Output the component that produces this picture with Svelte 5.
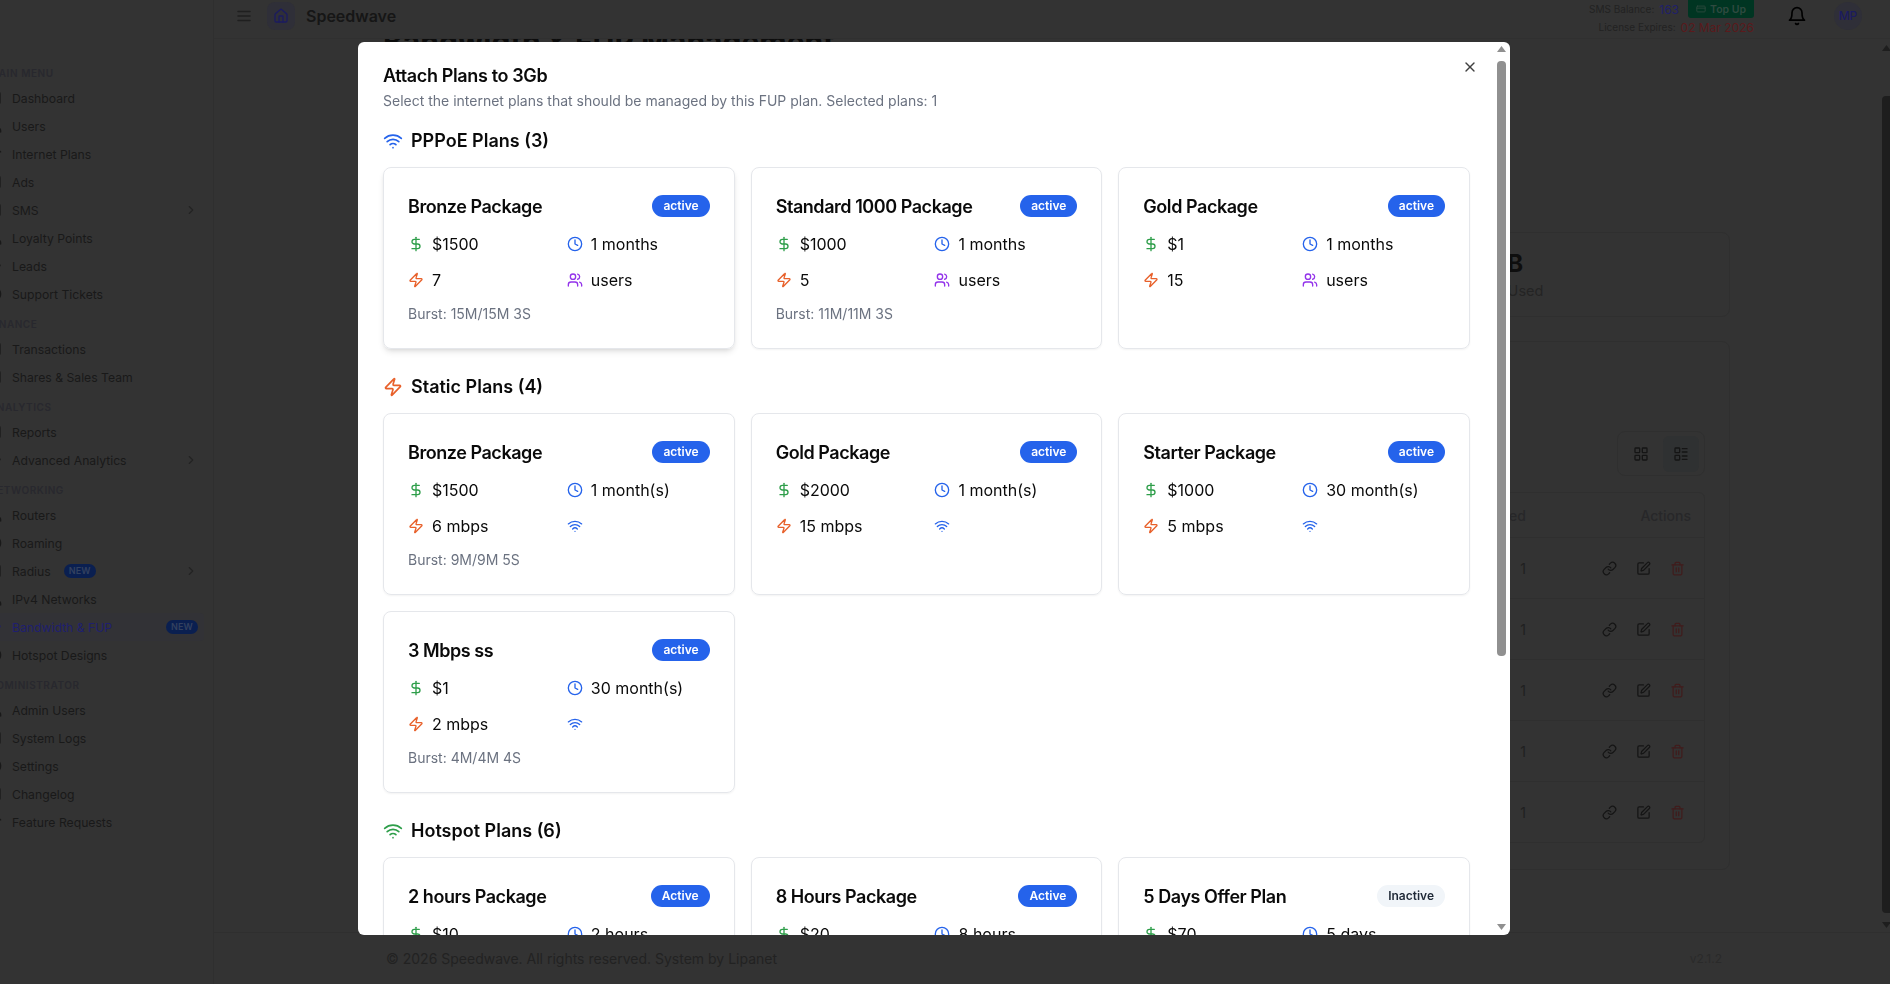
<script>
  const icons = {
    wifi: '<path d="M12 20h.01"/><path d="M2 8.82a15 15 0 0 1 20 0"/><path d="M5 12.859a10 10 0 0 1 14 0"/><path d="M8.5 16.429a5 5 0 0 1 7 0"/>',
    zap: '<path d="M4 14a1 1 0 0 1-.78-1.63l9.9-10.2a.5.5 0 0 1 .86.46l-1.92 6.02A1 1 0 0 0 13 10h7a1 1 0 0 1 .78 1.63l-9.9 10.2a.5.5 0 0 1-.86-.46l1.92-6.02A1 1 0 0 0 11 14z"/>',
    dollar: '<line x1="12" y1="2" x2="12" y2="22"/><path d="M17 5H9.5a3.5 3.5 0 0 0 0 7h5a3.5 3.5 0 0 1 0 7H6"/>',
    clock: '<circle cx="12" cy="12" r="10"/><polyline points="12 6 12 12 16 14"/>',
    users: '<path d="M16 21v-2a4 4 0 0 0-4-4H6a4 4 0 0 0-4 4v2"/><circle cx="9" cy="7" r="4"/><path d="M22 21v-2a4 4 0 0 0-3-3.87"/><path d="M16 3.13a4 4 0 0 1 0 7.75"/>',
    x: '<path d="M18 6 6 18"/><path d="m6 6 12 12"/>',
    home: '<path d="M15 21v-8a1 1 0 0 0-1-1h-4a1 1 0 0 0-1 1v8"/><path d="M3 10a2 2 0 0 1 .709-1.528l7-5.999a2 2 0 0 1 2.582 0l7 5.999A2 2 0 0 1 21 10v9a2 2 0 0 1-2 2H5a2 2 0 0 1-2-2z"/>',
    bell: '<path d="M6 8a6 6 0 0 1 12 0c0 7 3 9 3 9H3s3-2 3-9"/><path d="M10.3 21a1.94 1.94 0 0 0 3.4 0"/>',
    menu: '<path d="M4 6h16"/><path d="M4 12h16"/><path d="M4 18h16"/>',
    chevron: '<path d="m9 18 6-6-6-6"/>',
    card: '<rect x="2" y="5" width="20" height="14" rx="2"/><line x1="2" y1="10" x2="22" y2="10"/>',
    link: '<path d="M10 13a5 5 0 0 0 7.54.54l3-3a5 5 0 0 0-7.07-7.07l-1.72 1.71"/><path d="M14 11a5 5 0 0 0-7.54-.54l-3 3a5 5 0 0 0 7.07 7.07l1.71-1.71"/>',
    edit: '<path d="M12 3H5a2 2 0 0 0-2 2v14a2 2 0 0 0 2 2h14a2 2 0 0 0 2-2v-7"/><path d="M18.375 2.625a1 1 0 0 1 3 3l-9.013 9.014a2 2 0 0 1-.853.505l-2.873.84a.5.5 0 0 1-.62-.62l.84-2.873a2 2 0 0 1 .506-.852z"/>',
    trash: '<path d="M3 6h18"/><path d="M19 6v14c0 1-1 2-2 2H7c-1 0-2-1-2-2V6"/><path d="M8 6V4c0-1 1-2 2-2h4c1 0 2 1 2 2v2"/><line x1="10" y1="11" x2="10" y2="17"/><line x1="14" y1="11" x2="14" y2="17"/>',
    grid: '<rect x="3" y="3" width="7" height="7" rx="1"/><rect x="14" y="3" width="7" height="7" rx="1"/><rect x="14" y="14" width="7" height="7" rx="1"/><rect x="3" y="14" width="7" height="7" rx="1"/>',
    list: '<rect x="3" y="3" width="7" height="7" rx="1"/><rect x="3" y="14" width="7" height="7" rx="1"/><path d="M14 4h7"/><path d="M14 9h7"/><path d="M14 15h7"/><path d="M14 20h7"/>',
    box: '<rect x="3" y="3" width="18" height="18" rx="3"/>'
  };

  const nav = [
    { label: "MAIN MENU", items: [
      { name: "Dashboard" }, { name: "Users", icon: "users" }, { name: "Internet Plans", icon: "wifi" }, { name: "Ads" },
      { name: "SMS", more: true }, { name: "Loyalty Points", icon: "users" }, { name: "Leads", icon: "zap" }, { name: "Support Tickets", icon: "clock" }
    ] },
    { label: "FINANCE", items: [{ name: "Transactions" }, { name: "Shares & Sales Team" }] },
    { label: "ANALYTICS", items: [{ name: "Reports" }, { name: "Advanced Analytics", icon: "zap", more: true }] },
    { label: "NETWORKING", items: [
      { name: "Routers", icon: "users" }, { name: "Roaming", icon: "clock" }, { name: "Radius", badge: true, more: true },
      { name: "IPv4 Networks", icon: "users" }, { name: "Bandwidth & FUP", icon: "zap", active: true, badge: true }, { name: "Hotspot Designs", icon: "clock" }
    ] },
    { label: "ADMINISTRATOR", items: [
      { name: "Admin Users", icon: "users" }, { name: "System Logs" }, { name: "Settings", icon: "clock" },
      { name: "Changelog" }, { name: "Feature Requests", icon: "wifi" }
    ] }
  ];

  const pppoe = [
    { name: "Bronze Package", price: "$1500", time: "1 months", speed: "7", burst: "15M/15M 3S", hover: true },
    { name: "Standard 1000 Package", price: "$1000", time: "1 months", speed: "5", burst: "11M/11M 3S" },
    { name: "Gold Package", price: "$1", time: "1 months", speed: "15" }
  ];
  const statics = [
    { name: "Bronze Package", price: "$1500", time: "1 month(s)", speed: "6 mbps", burst: "9M/9M 5S" },
    { name: "Gold Package", price: "$2000", time: "1 month(s)", speed: "15 mbps" },
    { name: "Starter Package", price: "$1000", time: "30 month(s)", speed: "5 mbps" },
    { name: "3 Mbps ss", price: "$1", time: "30 month(s)", speed: "2 mbps", burst: "4M/4M 4S" }
  ];
  const hotspot = [
    { name: "2 hours Package", price: "$10", time: "2 hours", speed: "3 mbps", status: "Active" },
    { name: "8 Hours Package", price: "$20", time: "8 hours", speed: "3 mbps", status: "Active" },
    { name: "5 Days Offer Plan", price: "$70", time: "5 days", speed: "5 mbps", status: "Inactive" }
  ];
  const sections = [
    { title: "PPPoE Plans (3)", icon: "wifi", cls: "blue", plans: pppoe, tail: "users" },
    { title: "Static Plans (4)", icon: "zap", cls: "orange", plans: statics, tail: "wifi" },
    { title: "Hotspot Plans (6)", icon: "wifi", cls: "green", plans: hotspot, tail: "wifi" }
  ];
  const rows = ["3Gb", "5Gb", "10Gb", "20Gb", "50Gb"];
</script>

{#snippet icon(name, size, cls = "")}
  <svg class="ic {cls}" width={size} height={size} viewBox="0 0 24 24" fill="none" stroke="currentColor" stroke-width="2" stroke-linecap="round" stroke-linejoin="round">{@html icons[name]}</svg>
{/snippet}

{#snippet arrows()}
  <svg class="arrow up" width="9" height="6" viewBox="0 0 9 6"><path d="M4.5 0 9 6H0z" fill="currentColor" /></svg>
  <svg class="arrow down" width="9" height="6" viewBox="0 0 9 6"><path d="M0 0h9L4.5 6z" fill="currentColor" /></svg>
{/snippet}

<div class="shell">
  <aside class="sidebar">
    <nav class="nav">
      {#each nav as group}
        <div class="group-label">{group.label}</div>
        {#each group.items as item}
          <div class="nav-item" class:active={item.active}>
            {@render icon(item.icon ?? "box", 16)}
            <span class="nav-name">{item.name}</span>
            {#if item.badge}<span class="new" class:push={item.active}>NEW</span>{/if}
            {#if item.more}<span class="chev">{@render icon("chevron", 14)}</span>{/if}
          </div>
        {/each}
      {/each}
    </nav>
  </aside>

  <div class="main">
    <header class="topbar">
      <span class="burger">{@render icon("menu", 18)}</span>
      <span class="logo">{@render icon("home", 16)}</span>
      <span class="brand">Speedwave</span>
      <div class="status">
        <div class="status-row">
          <span>SMS Balance:</span><b class="balance">163</b>
          <span class="topup">{@render icon("card", 10)}Top Up</span>
        </div>
        <div class="status-row">
          <span>License Expires:</span><b class="expires">02 Mar 2026</b>
        </div>
      </div>
      <span class="bell">{@render icon("bell", 20)}</span>
      <span class="avatar">MP</span>
    </header>

    <div class="scroller">
      <div class="content">
        <h1>Bandwidth &amp; FUP Management</h1>
        <div class="stats">
          <div class="stat"></div>
          <div class="stat"></div>
          <div class="stat"></div>
          <div class="stat"><strong>1.28 GB</strong><span>Total Data Used</span></div>
        </div>
        <section class="panel">
          <div class="toggle">
            <span class="tog">{@render icon("grid", 16)}</span>
            <span class="tog on">{@render icon("list", 16)}</span>
          </div>
          <div class="table">
            <div class="tr head">
              <span>Name</span><span>Data Limit</span><span>Speed</span><span class="num">Attached</span><span class="acts-head">Actions</span>
            </div>
            {#each rows as row}
              <div class="tr">
                <span>{row}</span><span>{row}</span><span>10 Mbps</span><span class="num">1</span>
                <span class="acts">
                  {@render icon("link", 15)}
                  {@render icon("edit", 15)}
                  {@render icon("trash", 15, "del")}
                </span>
              </div>
            {/each}
          </div>
        </section>
      </div>
      <div class="bar page-bar">
        {@render arrows()}
        <span class="thumb"></span>
      </div>
    </div>

    <footer class="foot">
      <span>© 2026 Speedwave. All rights reserved. System by Lipanet</span>
      <span class="ver">v2.1.2</span>
    </footer>
  </div>
</div>

<div class="dialog-wrap">
  <div class="dialog">
    <button class="close" aria-label="Close">{@render icon("x", 16)}</button>
    <h2>Attach Plans to 3Gb</h2>
    <p class="sub">Select the internet plans that should be managed by this FUP plan. Selected plans: 1</p>

    {#each sections as section}
      <div class="sec">
        <h3>{@render icon(section.icon, 20, section.cls)}{section.title}</h3>
        <div class="plans">
          {#each section.plans as plan}
            <div class="plan" class:hover={plan.hover}>
              <div class="plan-head">
                <span class="plan-name">{plan.name}</span>
                <span class="pill" class:off={plan.status === "Inactive"}>{plan.status ?? "active"}</span>
              </div>
              <div class="facts">
                <span class="fact">{@render icon("dollar", 16, "green")}{plan.price}</span>
                <span class="fact">{@render icon("clock", 16, "blue")}{plan.time}</span>
                <span class="fact">{@render icon("zap", 16, "orange")}{plan.speed}</span>
                <span class="fact">
                  {@render icon(section.tail, 16, section.tail === "users" ? "purple" : "blue")}
                  {#if section.tail === "users"}users{/if}
                </span>
              </div>
              {#if plan.burst}<div class="burst">Burst: {plan.burst}</div>{/if}
            </div>
          {/each}
        </div>
      </div>
    {/each}

    <div class="bar dialog-bar">
      {@render arrows()}
      <span class="thumb"></span>
    </div>
  </div>
</div>

<style>
  :global(body) {
    margin: 0;
    background: #333;
    overflow: hidden;
  }

  .shell {
    display: flex;
    width: 1890px;
    height: 984px;
    background: #333;
    color: #1d1d1d;
    font-family: Inter, "Liberation Sans", sans-serif;
  }

  .ic {
    display: block;
    flex: none;
  }

  .sidebar {
    width: 213px;
    flex: none;
    overflow: hidden;
    border-right: 1px solid #2f2f2f;
  }

  .nav {
    margin-left: -14px;
    width: 218px;
    padding-top: 57px;
  }

  .group-label {
    height: 27px;
    padding-top: 10px;
    box-sizing: border-box;
    font-size: 10px;
    line-height: 13px;
    font-weight: 600;
    letter-spacing: 0.55px;
    color: #28282e;
    white-space: nowrap;
    margin-left: 3px;
  }

  .nav-item {
    display: flex;
    align-items: center;
    height: 28px;
    gap: 10px;
    font-size: 12.2px;
    color: #191919;
    white-space: nowrap;
  }

  .nav-item.active {
    background: #323236;
    border-radius: 4px;
    color: #1f1f6e;
  }

  .new {
    margin-left: 3px;
    padding: 0 5px;
    height: 14px;
    line-height: 14px;
    border-radius: 7px;
    background: #0a1f50;
    color: #33415f;
    font-size: 9px;
    font-weight: 600;
    letter-spacing: 0.2px;
  }

  .new.push {
    margin-left: auto;
    margin-right: 6px;
  }

  .chev {
    margin-left: auto;
    margin-right: 6px;
    color: #232323;
  }

  .main {
    flex: 1;
    min-width: 0;
    display: flex;
    flex-direction: column;
  }

  .topbar {
    height: 38px;
    flex: none;
    display: flex;
    align-items: flex-start;
    padding-left: 21px;
    padding-right: 28px;
    border-bottom: 1px solid #303030;
  }

  .burger {
    margin-top: 7px;
    color: #1f1f1f;
    margin-right: 14px;
  }

  .logo {
    width: 28px;
    height: 28px;
    margin-top: 2px;
    border-radius: 8px;
    background: #2f2f38;
    color: #1b1b60;
    display: flex;
    align-items: center;
    justify-content: center;
    margin-right: 11px;
  }

  .brand {
    font-size: 16px;
    font-weight: 600;
    line-height: 32px;
    color: #161616;
  }

  .status {
    margin-left: auto;
    font-size: 10px;
    color: #222;
    display: flex;
    flex-direction: column;
    align-items: flex-end;
  }

  .status-row {
    display: flex;
    align-items: center;
    gap: 5px;
    height: 18px;
  }

  .balance {
    font-size: 12px;
    font-weight: 400;
    color: #20206a;
  }

  .expires {
    font-size: 12px;
    font-weight: 400;
    color: #5a1a1c;
  }

  .topup {
    display: flex;
    align-items: center;
    gap: 4px;
    height: 18px;
    padding: 0 8px;
    margin-left: 4px;
    border-radius: 0 0 3px 3px;
    background: #003522;
    color: #2f4a40;
    font-weight: 600;
    font-size: 10.5px;
  }

  .bell {
    margin-left: 33px;
    margin-top: 6px;
    color: #000;
  }

  .avatar {
    width: 28px;
    height: 28px;
    margin-top: 2px;
    margin-left: 27px;
    border-radius: 50%;
    background: #2f2f38;
    color: #1b1b60;
    font-size: 12px;
    font-weight: 500;
    line-height: 28px;
    text-align: center;
  }

  .scroller {
    position: relative;
    height: 893px;
    overflow: hidden;
    flex: none;
  }

  .content {
    width: 1350px;
    margin-left: 166px;
    margin-top: -15px;
  }

  h1 {
    margin: 0 0 0 3px;
    font-size: 30px;
    line-height: 36px;
    font-weight: 700;
    color: #0c0c0c;
    white-space: nowrap;
  }

  .stats {
    display: grid;
    grid-template-columns: repeat(4, 1fr);
    gap: 16px;
    margin-top: 172px;
    height: 84px;
  }

  .stat {
    border: 1px solid #2f2f2f;
    border-radius: 8px;
    padding: 15px 24px 14px 29px;
    box-sizing: border-box;
    display: flex;
    flex-direction: column;
    white-space: nowrap;
  }

  .stat strong {
    font-size: 24px;
    line-height: 32px;
    font-weight: 700;
    color: #0e0e0e;
  }

  .stat span {
    font-size: 14.5px;
    line-height: 22px;
    color: #242424;
  }

  .panel {
    margin-top: 25px;
    border: 1px solid #2f2f2f;
    border-radius: 8px;
    height: 529px;
    box-sizing: border-box;
    padding: 89px 24px 0;
  }

  .toggle {
    width: 88px;
    height: 45px;
    margin-left: auto;
    border: 1px solid #2f2f2f;
    border-radius: 8px;
    box-sizing: border-box;
    display: flex;
    align-items: center;
    justify-content: center;
    gap: 4px;
    color: #151515;
  }

  .tog {
    width: 36px;
    height: 36px;
    border-radius: 6px;
    display: flex;
    align-items: center;
    justify-content: center;
  }

  .tog.on {
    background: #2f3132;
  }

  .table {
    margin-top: 16px;
    border: 1px solid #2f2f2f;
    border-radius: 6px;
    font-size: 14px;
    color: #202020;
  }

  .tr {
    display: grid;
    grid-template-columns: 1fr 220px 220px 100px 178px;
    align-items: center;
    height: 61px;
    padding-left: 16px;
    border-top: 1px solid #2f2f2f;
    box-sizing: border-box;
  }

  .tr.head {
    height: 44px;
    border-top: 0;
    font-weight: 500;
    color: #272729;
  }

  .num {
    text-align: right;
  }

  .acts-head {
    text-align: right;
    padding-right: 13px;
  }

  .acts {
    display: flex;
    justify-content: flex-end;
    gap: 19px;
    padding-right: 19px;
    color: #151515;
  }

  .acts :global(.del) {
    color: #401c1c;
  }

  .foot {
    flex: 1;
    display: flex;
    justify-content: space-between;
    align-items: center;
    padding: 0 168px 0 172px;
    border-top: 1px solid #2f2f2f;
    font-size: 14px;
    color: #222;
  }

  .ver {
    font-size: 12px;
    color: #2a2a2a;
  }

  /* the browser hides real scrollbars when photographed, so these two are drawn */
  .bar {
    position: absolute;
    top: 0;
    bottom: 0;
  }

  .thumb {
    position: absolute;
    left: 0;
    right: 0;
  }

  .arrow {
    position: absolute;
    display: block;
    left: 0;
  }

  .page-bar {
    right: 0;
    width: 8px;
    color: #1e1e1e;
  }

  .page-bar .thumb {
    top: 57px;
    bottom: 19px;
    border-radius: 4px 0 0 4px;
    background: #1e1e1e;
  }

  .page-bar .arrow.up {
    top: 6px;
  }

  .page-bar .arrow.down {
    bottom: 4px;
  }

  .dialog-wrap {
    position: fixed;
    left: 358px;
    top: 42px;
    width: 1152px;
    height: 893px;
    border-radius: 6px;
    overflow: hidden;
    background: #fff;
  }

  .dialog {
    height: 100%;
    box-sizing: border-box;
    overflow: hidden;
    padding: 20px 40px 0 25px;
    font-family: Inter, "Liberation Sans", sans-serif;
    color: #0a0a0a;
  }

  .dialog-bar {
    right: 4px;
    width: 9px;
    color: #909090;
  }

  .dialog-bar .thumb {
    top: 19px;
    height: 595px;
    border-radius: 4px;
    background: #909090;
  }

  .dialog-bar .arrow.up {
    top: 4px;
  }

  .dialog-bar .arrow.down {
    bottom: 5px;
  }

  .close {
    position: absolute;
    top: 17px;
    right: 32px;
    padding: 0;
    border: 0;
    background: none;
    color: #404040;
  }

  h2 {
    margin: 0;
    font-size: 18px;
    line-height: 28px;
    font-weight: 600;
    letter-spacing: -0.02em;
  }

  .sub {
    margin: 1px 0 0;
    font-size: 14px;
    line-height: 20px;
    color: #6b7280;
  }

  .sec {
    margin-top: 24px;
  }

  .sec:first-of-type {
    margin-top: 16px;
  }

  h3 {
    display: flex;
    align-items: center;
    gap: 8px;
    margin: 0 0 12px;
    font-size: 18px;
    line-height: 28px;
    font-weight: 600;
  }

  .plans {
    display: grid;
    grid-template-columns: repeat(3, 1fr);
    gap: 16px;
  }

  .plan {
    border: 1px solid #e5e7eb;
    border-radius: 8px;
    padding: 24px;
    min-height: 181px;
    box-sizing: border-box;
    box-shadow: 0 1px 2px rgba(0, 0, 0, 0.05);
  }

  .plan.hover {
    box-shadow: 0 4px 6px -1px rgba(0, 0, 0, 0.1), 0 2px 4px -2px rgba(0, 0, 0, 0.1);
  }

  .plan-head {
    display: flex;
    align-items: center;
    justify-content: space-between;
    height: 28px;
    margin-bottom: 12px;
  }

  .plan-name {
    font-size: 18px;
    font-weight: 600;
    letter-spacing: -0.025em;
    line-height: 27px;
  }

  .pill {
    padding: 0 11px;
    height: 22px;
    line-height: 22px;
    border-radius: 11px;
    background: #2563eb;
    color: #fff;
    font-size: 12px;
    font-weight: 600;
  }

  .pill.off {
    background: #f1f5f9;
    color: #1f2937;
  }

  .facts {
    display: grid;
    grid-template-columns: 1fr 1fr;
    gap: 12px 16px;
  }

  .fact {
    display: flex;
    align-items: center;
    gap: 8px;
    height: 24px;
    font-size: 16px;
  }

  .burst {
    margin-top: 12px;
    font-size: 14px;
    line-height: 20px;
    color: #6b7280;
  }

  :global(.ic.blue) { color: #2563eb; }
  :global(.ic.orange) { color: #e8602a; }
  :global(.ic.green) { color: #2e9e4a; }
  :global(.ic.purple) { color: #9333ea; }
</style>
